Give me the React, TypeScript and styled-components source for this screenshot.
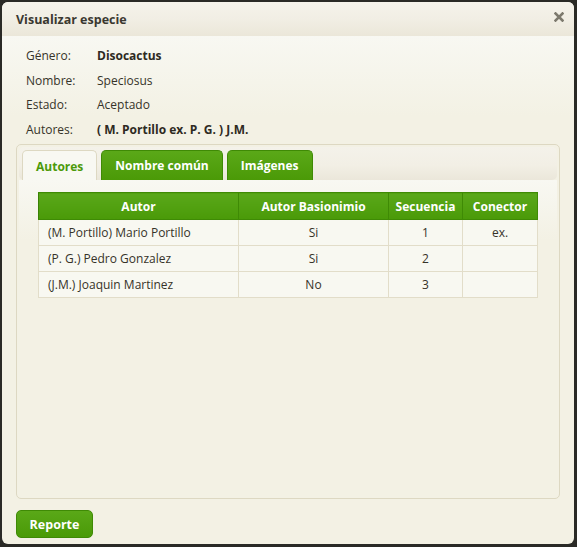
import React from "react";
import styled, { createGlobalStyle } from "styled-components";

const GlobalStyle = createGlobalStyle`
  html, body {
    margin: 0;
    padding: 0;
    background: #2a2a26;
  }
  body {
    font-family: "Open Sans", "Noto Sans", sans-serif;
  }
`;

const fields = [
  { label: "Género:", value: "Disocactus", bold: true },
  { label: "Nombre:", value: "Speciosus", bold: false },
  { label: "Estado:", value: "Aceptado", bold: false },
  { label: "Autores:", value: "( M. Portillo ex. P. G. ) J.M.", bold: true },
];

const autores = [
  { autor: "(M. Portillo) Mario Portillo", basionimio: "Si", secuencia: "1", conector: "ex." },
  { autor: "(P. G.) Pedro Gonzalez", basionimio: "Si", secuencia: "2", conector: "" },
  { autor: "(J.M.) Joaquin Martinez", basionimio: "No", secuencia: "3", conector: "" },
];

const tabs = ["Autores", "Nombre común", "Imágenes"];

const App = () => (
  <>
    <GlobalStyle />
    <Page>
      <Dialog>
        <TitleBar>
          <Title>Visualizar especie</Title>
          <Close aria-label="close">
            <svg width="10" height="10" viewBox="0 0 10 10">
              <path d="M1.5 1.5 L8.5 8.5 M8.5 1.5 L1.5 8.5" stroke="#7d7a6e" strokeWidth="2.6" strokeLinecap="square" />
            </svg>
          </Close>
        </TitleBar>
        <Body>
          <Fields>
            {fields.map((f) => (
              <FieldRow key={f.label}>
                <Label>{f.label}</Label>
                <Value $bold={f.bold}>{f.value}</Value>
              </FieldRow>
            ))}
          </Fields>
          <Tabs>
            <TabNav>
              {tabs.map((t, i) => (
                <Tab key={t} $active={i === 0}>
                  {t}
                </Tab>
              ))}
            </TabNav>
            <Panel>
              <Table>
                <colgroup>
                  <col width="200" />
                  <col width="150" />
                  <col width="74" />
                  <col />
                </colgroup>
                <thead>
                  <tr>
                    <Th>Autor</Th>
                    <Th>Autor Basionimio</Th>
                    <Th>Secuencia</Th>
                    <Th>Conector</Th>
                  </tr>
                </thead>
                <tbody>
                  {autores.map((a) => (
                    <tr key={a.autor}>
                      <Td>{a.autor}</Td>
                      <Td $center>{a.basionimio}</Td>
                      <Td $center>{a.secuencia}</Td>
                      <Td $center>{a.conector}</Td>
                    </tr>
                  ))}
                </tbody>
              </Table>
            </Panel>
          </Tabs>
        </Body>
        <ButtonPane>
          <Button>Reporte</Button>
        </ButtonPane>
      </Dialog>
    </Page>
  </>
);

const Page = styled.div`
  width: 577px;
  height: 547px;
  padding: 2px 3px 3px 2px;
  box-sizing: border-box;
`;

const Dialog = styled.div`
  display: flex;
  flex-direction: column;
  height: 542px;
  background: #f3f1e4;
  border-radius: 6px;
  overflow: hidden;
`;

const TitleBar = styled.div`
  display: flex;
  flex-shrink: 0;
  align-items: center;
  justify-content: space-between;
  height: 34px;
  padding: 0 10px 0 14px;
  background: linear-gradient(#f5f3eb 0%, #f1eee4 50%, #ebe7d9 100%);
`;

const Title = styled.span`
  font-size: 12.5px;
  font-weight: 700;
  color: #3a3830;
`;

const Close = styled.span`
  display: flex;
  margin-top: -4px;
`;

const Body = styled.div`
  display: flex;
  flex-shrink: 0;
  flex-direction: column;
  padding: 7px 14px 0;
  background: linear-gradient(#f8f8f2 0px, #f3f1e4 80px);
`;

const Fields = styled.div`
  display: flex;
  flex-direction: column;
  padding: 0 0 2px 10px;
`;

const FieldRow = styled.div`
  display: flex;
  align-items: center;
  height: 24.75px;
  font-size: 12px;
  color: #363329;
`;

const Label = styled.span`
  width: 71px;
`;

const Value = styled.span<{ $bold: boolean }>`
  font-weight: ${(p) => (p.$bold ? 700 : 400)};
  color: ${(p) => (p.$bold ? "#2e2a22" : "#363329")};
`;

const Tabs = styled.div`
  display: flex;
  flex-direction: column;
  height: 355px;
  box-sizing: border-box;
  padding: 2px;
  border: 1px solid #ddd8c2;
  border-radius: 5px;
`;

const TabNav = styled.div`
  display: flex;
  align-items: flex-end;
  gap: 4px;
  height: 33px;
  padding: 0 3px;
  border-radius: 5px;
  background: linear-gradient(#f4f2ea 0%, #f2efe5 55%, #ebe7da 100%);
`;

const Tab = styled.div<{ $active: boolean }>`
  display: flex;
  align-items: center;
  height: ${(p) => (p.$active ? 31 : 30)}px;
  margin-bottom: ${(p) => (p.$active ? -1 : 0)}px;
  padding: 0 13px;
  box-sizing: border-box;
  border: 1px solid ${(p) => (p.$active ? "#ddd8c2" : "#3f8a05")};
  border-bottom: none;
  border-radius: 5px 5px 0 0;
  font-size: 12px;
  font-weight: 700;
  color: ${(p) => (p.$active ? "#4c9a0a" : "#ffffff")};
  background: ${(p) =>
    p.$active ? "#f8f8f2" : "linear-gradient(#5aa818 0%, #4b9a07 100%)"};
`;

const Panel = styled.div`
  flex: 1;
  padding: 12px 19px;
  background: linear-gradient(#f8f8f2 0px, #f3f1e4 60px);
`;

const Table = styled.table`
  width: 500px;
  table-layout: fixed;
  border-collapse: collapse;
  font-size: 12px;
`;

const Th = styled.th`
  height: 26px;
  padding: 0;
  border: 1px solid #3f8a05;
  border-left-color: #3a8104;
  font-weight: 700;
  color: #ffffff;
  text-align: center;
  white-space: nowrap;
  background: linear-gradient(#5aa81a 0%, #4a9a08 100%);
`;

const Td = styled.td<{ $center?: boolean }>`
  height: 25px;
  padding: 0 0 0 9px;
  border: 1px solid #e2ddc9;
  color: #363329;
  text-align: ${(p) => (p.$center ? "center" : "left")};
  background: #f8f8f1;
  ${(p) => p.$center && "padding: 0;"}
`;

const ButtonPane = styled.div`
  display: flex;
  flex-shrink: 0;
  padding: 11px 14px 6px;
`;

const Button = styled.button`
  width: 77px;
  height: 28px;
  padding: 0;
  border: 1px solid #3f8a05;
  border-radius: 5px;
  font-family: inherit;
  font-size: 12.5px;
  font-weight: 700;
  color: #ffffff;
  background: linear-gradient(#5aa818 0%, #4a9a07 100%);
`;

export default App;
